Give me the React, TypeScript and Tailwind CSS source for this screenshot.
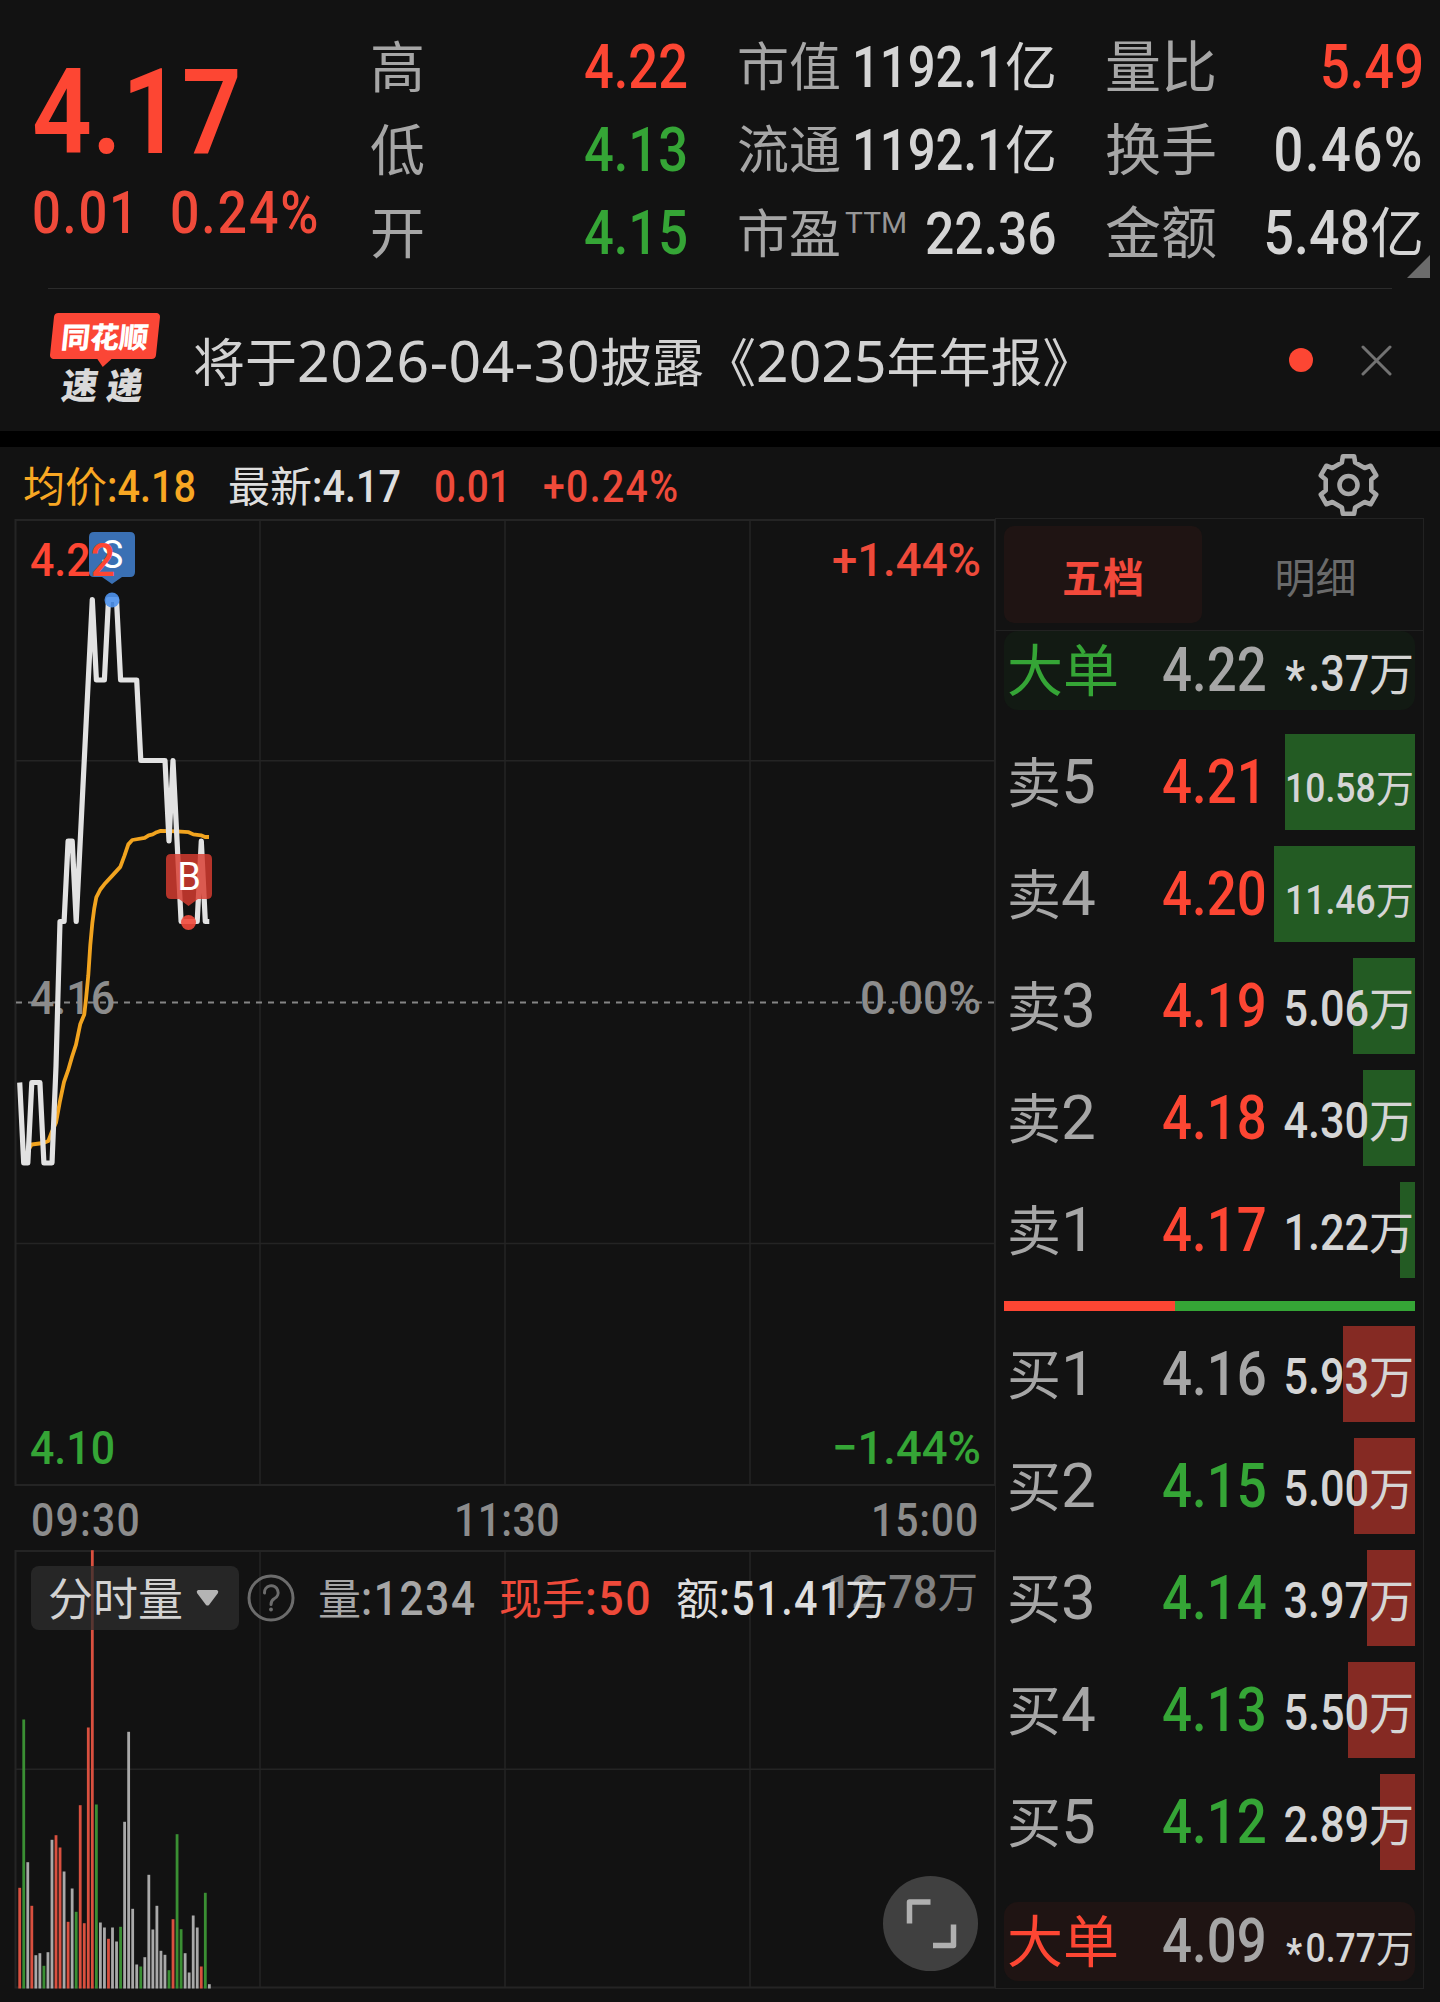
import type { ReactNode } from "react";

type Tone = "up" | "down" | "flat";

type Level = {
  label: string;
  price: string;
  tone: Tone;
  volume: string;
  size: number;
  small?: boolean;
};

const TONE_TEXT: Record<Tone, string> = {
  up: "text-[#fd4633]",
  down: "text-[#35a536]",
  flat: "text-[#a6a6a6]",
};

const SELLS: Level[] = [
  { label: "卖5", price: "4.21", tone: "up", volume: "10.58", size: 130, small: true },
  { label: "卖4", price: "4.20", tone: "up", volume: "11.46", size: 141, small: true },
  { label: "卖3", price: "4.19", tone: "up", volume: "5.06", size: 62 },
  { label: "卖2", price: "4.18", tone: "up", volume: "4.30", size: 52 },
  { label: "卖1", price: "4.17", tone: "up", volume: "1.22", size: 15 },
];

const BUYS: Level[] = [
  { label: "买1", price: "4.16", tone: "flat", volume: "5.93", size: 72 },
  { label: "买2", price: "4.15", tone: "down", volume: "5.00", size: 61 },
  { label: "买3", price: "4.14", tone: "down", volume: "3.97", size: 48 },
  { label: "买4", price: "4.13", tone: "down", volume: "5.50", size: 67 },
  { label: "买5", price: "4.12", tone: "down", volume: "2.89", size: 35 },
];

// 分时价格：[分钟, 价格]
const PRICES: [number, number][] = [
  [0, 4.15], [1, 4.14], [2, 4.14], [3, 4.15], [5, 4.15], [6, 4.14], [8, 4.14], [9, 4.152],
  [10, 4.17], [11, 4.17], [12, 4.18], [13, 4.18], [14, 4.17], [18, 4.21], [19, 4.2], [21, 4.2],
  [22, 4.21], [24, 4.21], [25, 4.2], [29, 4.2], [30, 4.19], [36, 4.19], [37, 4.18], [38, 4.19],
  [40, 4.17], [44, 4.17], [45, 4.18], [46, 4.17], [47, 4.17],
];

const AVG_LINE =
  "23.7,1157.5 31.7,1144.5 43.3,1143 48.3,1141 52,1131.5 56,1122.8 60,1101 64,1082 68,1070.7 72,1056.9 76,1044.7 80.3,1023.9 84.3,1014.4 86,999.2 88.3,975.3 90.3,945 92.3,923.3 94.3,908.1 96.3,897.3 100.3,889.5 104.3,884.3 112.3,875.6 120.3,866.9 124.3,856.1 128.3,844.4 132.3,840 144.7,837.9 148.7,835.3 152.7,834.4 156.7,832.2 160.7,830.9 176.7,831.4 188.7,832.2 193.3,834.4 201,835.3 205,837 209,837";

// 每分钟成交量柱：颜色 + 高度
const BARS: [string, number][] = [
  ["r", 100.7], ["g", 269], ["w", 126.3], ["r", 82.7], ["w", 33.3], ["w", 35.3], ["g", 22.7], ["w", 36.3],
  ["w", 148.7], ["r", 153.3], ["r", 141], ["w", 117], ["r", 66.7], ["w", 100], ["g", 76.7], ["r", 183.3],
  ["r", 65.3], ["r", 261], ["r", 438.3], ["g", 184], ["w", 66], ["w", 61], ["r", 49.7], ["w", 61],
  ["w", 47], ["g", 61.7], ["w", 166.7], ["w", 256.7], ["w", 79.7], ["w", 24], ["g", 22], ["w", 31.3],
  ["w", 113.7], ["w", 59], ["w", 82.7], ["w", 37.7], ["w", 33.7], ["g", 18.3], ["r", 69.3], ["g", 154.3],
  ["g", 59.3], ["w", 35.3], ["w", 16], ["w", 73], ["w", 61], ["r", 22], ["g", 95.7], ["w", 4.3],
];

const BAR_FILL: Record<string, string> = { r: "#d9503f", g: "#3a8f33", w: "#a9a9a9" };

const minuteX = (m: number) => 19.7 + m * 4.035;
const priceY = (p: number) => 1002 - (p - 4.16) * 8050;

const PRICE_LINE = PRICES.map(([m, p]) => `${minuteX(m).toFixed(1)},${priceY(p).toFixed(1)}`).join(" ");

function gearPath() {
  const pts: string[] = [];
  for (let i = 0; i < 6; i++) {
    for (const [offset, r] of [[-16.5, 22.4], [-11, 28], [11, 28], [16.5, 22.4]]) {
      const a = ((i * 60 + offset) * Math.PI) / 180;
      pts.push(`${(32 + r * Math.sin(a)).toFixed(2)} ${(32 - r * Math.cos(a)).toFixed(2)}`);
    }
  }
  return `M${pts.join("L")}Z`;
}

function Num({ children, className = "" }: { children: ReactNode; className?: string }) {
  return <span className={`inline-block whitespace-nowrap font-medium ${className}`}>{children}</span>;
}

function Stat({ label, children, labelClass }: { label: ReactNode; children: ReactNode; labelClass: string }) {
  return (
    <div className="flex h-[83px] items-baseline justify-between leading-[83px]">
      <span className={`whitespace-nowrap text-[#a6a6a6] ${labelClass}`}>{label}</span>
      <span className="flex items-baseline">{children}</span>
    </div>
  );
}

const STAT_NUM = "origin-right translate-y-px scale-x-[.86] text-[61px]";

function Quote() {
  return (
    <section className="flex h-[288px]">
      <div className="w-[370px] pl-[32px] pt-[54px] text-[#fd4633]">
        <div className="h-[118px] text-[118px] leading-[118px]">
          <span className="inline-block origin-left scale-x-[.89] font-semibold">4.17</span>
        </div>
        <div className="mt-[11px] flex text-[59px] leading-[60px] text-[#f04a3a]">
          <Num className="w-[138px] origin-left scale-x-[.86] tracking-[0.035em]">0.01</Num>
          <Num className="origin-left scale-x-[.88] tracking-[0.035em]">0.24%</Num>
        </div>
      </div>

      <div className="w-[318px] pt-[25px]">
        <Stat label="高" labelClass="text-[55px]">
          <Num className={`${STAT_NUM} text-[#fd4633]`}>4.22</Num>
        </Stat>
        <Stat label="低" labelClass="text-[55px]">
          <Num className={`${STAT_NUM} text-[#35a536]`}>4.13</Num>
        </Stat>
        <Stat label="开" labelClass="text-[55px]">
          <Num className={`${STAT_NUM} text-[#35a536]`}>4.15</Num>
        </Stat>
      </div>

      <div className="ml-[49px] w-[320px] pt-[25px] text-[#d5d5d5]">
        {["市值", "流通"].map((name) => (
          <Stat key={name} label={name} labelClass="text-[52px]">
            <Num className="w-[153px] origin-left translate-y-px scale-x-[.86] text-[57px]">1192.1</Num>
            <span className="text-[52px]">亿</span>
          </Stat>
        ))}
        <Stat
          labelClass="text-[52px]"
          label={
            <>
              市盈
              <span className="inline-block -translate-y-[20px] pl-[4px] text-[30px] leading-none text-[#969696]">TTM</span>
            </>
          }
        >
          <Num className="w-[132px] origin-left translate-y-px scale-x-[.86] text-[60px]">22.36</Num>
        </Stat>
      </div>

      <div className="relative ml-[48px] w-[319px] pt-[25px] text-[#d5d5d5]">
        <Stat label="量比" labelClass="text-[56px]">
          <Num className={`${STAT_NUM} text-[#fd4633]`}>5.49</Num>
        </Stat>
        <Stat label="换手" labelClass="text-[56px]">
          <Num className={`${STAT_NUM} tracking-[0.03em]`}>0.46%</Num>
        </Stat>
        <Stat label="金额" labelClass="text-[56px]">
          <Num className="origin-right translate-y-px scale-x-[.88] text-[61px]">5.48</Num>
          <span className="text-[54px]">亿</span>
        </Stat>
        <svg className="absolute -right-[6px] top-[255px] h-[23px] w-[23px]" viewBox="0 0 23 23">
          <path d="M23 0V23H0Z" fill="#6c6c6c" />
        </svg>
      </div>
    </section>
  );
}

function NewsBanner() {
  return (
    <section className="mx-12 flex h-[143px] items-center border-t border-[#2b2b2b]">
      <div className="flex h-[94px] w-[114px] flex-col items-center">
        <div className="relative flex h-[46px] w-[106px] -skew-x-[6deg] items-center justify-center rounded-[4px] bg-[#fb4636]">
          <span className="translate-y-[2px] text-[29px] font-black leading-none text-white">同花顺</span>
          <svg className="absolute left-[47px] top-[45px] h-[9px] w-[16px]" viewBox="0 0 16 9">
            <path d="M0 0H16L7 9Z" fill="#fb4636" />
          </svg>
        </div>
        <div className="mt-[9px] flex -skew-x-[8deg] gap-[9px] pr-[4px] text-[36px] font-black leading-[38px] text-[#d9d9d9]">
          <span>速</span>
          <span>递</span>
        </div>
      </div>
      <p className="ml-[31px] flex-1 translate-y-px whitespace-nowrap text-[52px] leading-none text-[#d2d2d2]">
        将于<span className="font-['Noto_Sans'] text-[57px] leading-none tracking-[0.55px]">2026-04-30</span>披露《
        <span className="font-['Noto_Sans'] text-[57px] leading-none">2025</span>年年报》
      </p>
      <span className="mr-[48px] h-[24px] w-[24px] rounded-full bg-[#fd4633]" />
      <svg className="h-[31px] w-[31px]" viewBox="0 0 31 31" stroke="#727272" strokeWidth="3" strokeLinecap="round">
        <path d="M2 2L29 29M29 2L2 29" />
      </svg>
    </section>
  );
}

function ChartHeader() {
  return (
    <div className="flex h-[72px] items-baseline pl-[23px] text-[42px] leading-[80px]">
      <span className="text-[#f8a723]">均价</span>
      <Num className="w-[121px] origin-left scale-x-[.9] text-[44px] text-[#f8a723]">:4.18</Num>
      <span className="text-[#dedede]">最新</span>
      <Num className="w-[122px] origin-left scale-x-[.9] text-[44px] text-[#dedede]">:4.17</Num>
      <Num className="w-[109px] origin-left scale-x-[.88] text-[44px] text-[#ee4a3a]">0.01</Num>
      <Num className="origin-left scale-x-[.89] text-[44px] tracking-[0.035em] text-[#ee4a3a]">+0.24%</Num>
      <svg className="ml-auto mr-[58px] h-[67px] w-[67px] translate-y-[1.5px] self-center" viewBox="0 0 64 64" fill="none" stroke="#a8a8a8" strokeWidth="4.4" strokeLinejoin="round">
        <path d={gearPath()} />
        <circle cx="32" cy="32" r="8.6" />
      </svg>
    </div>
  );
}

function PriceChart() {
  return (
    <svg className="block h-[967px] w-[996px]" viewBox="0 519 996 967">
      <g stroke="#242424" strokeWidth="2" fill="none">
        <path d="M15.5 520H995V1485H15.5Z" />
        <path d="M260 520V1485M505 520V1485M750 520V1485M16 760.7H995M16 1243.5H995" strokeWidth="1.5" />
      </g>
      <path d="M16 1002.5H995" stroke="#858585" strokeWidth="2" strokeDasharray="6 6" />
      <g fontSize="47" fontWeight="500">
        <text x="30" y="1014" textLength="85" lengthAdjust="spacingAndGlyphs" fill="#8c8c8c">4.16</text>
        <text x="860" y="1014" textLength="121" lengthAdjust="spacingAndGlyphs" fill="#8c8c8c">0.00%</text>
        <text x="30" y="1464" textLength="85" lengthAdjust="spacingAndGlyphs" fill="#35a536">4.10</text>
        <text x="832" y="1464" textLength="149" lengthAdjust="spacingAndGlyphs" fill="#35a536">−1.44%</text>
        <text x="832" y="576" textLength="149" lengthAdjust="spacingAndGlyphs" fill="#ee4a3a">+1.44%</text>
      </g>
      <polyline points={AVG_LINE} fill="none" stroke="#f2a41f" strokeWidth="3.8" strokeLinejoin="round" />
      <polyline points={PRICE_LINE} fill="none" stroke="#e2e2e2" strokeWidth="5.2" strokeLinejoin="round" />

      <path d="M94 532H130Q135 532 135 537V572Q135 577 130 577H122L112 584L102 577H94Q89 577 89 572V537Q89 532 94 532Z" fill="#3a70b4" />
      <text x="112" y="568" textAnchor="middle" fontSize="38" fill="#fff">S</text>
      <text x="30" y="576" textLength="85" lengthAdjust="spacingAndGlyphs" fontSize="47" fontWeight="500" fill="#fd4633">4.22</text>
      <circle cx="112" cy="600" r="7.5" fill="#4f94ee" fillOpacity=".9" />

      <path d="M171 854H207Q212 854 212 859V894Q212 899 207 899H198L188.5 906L179 899H171Q166 899 166 894V859Q166 854 171 854Z" fill="#d93c30" fillOpacity=".82" />
      <text x="189" y="890" textAnchor="middle" fontSize="38" fill="#fff">B</text>
      <circle cx="188.5" cy="922.5" r="7.5" fill="#f2493b" fillOpacity=".9" />
    </svg>
  );
}

function VolumePanel() {
  return (
    <div className="relative h-[452px] w-[996px]">
      <svg className="absolute inset-0 h-[452px] w-[996px]" viewBox="0 1550 996 452">
        <g stroke="#242424" strokeWidth="2" fill="none">
          <path d="M15.5 1551H995V1987.5H15.5Z" />
          <path d="M260 1551V1987M505 1551V1987M750 1551V1987M16 1769.3H995" strokeWidth="1.5" />
        </g>
        {BARS.map(([c, h], i) => (
          <rect key={i} x={minuteX(i) - 1.4} y={1988.5 - h} width="2.8" height={h} fill={BAR_FILL[c]} />
        ))}
        <text x="827" y="1608" textLength="151" lengthAdjust="spacingAndGlyphs" fontSize="46" fontWeight="500" fill="#808080">
          12.78<tspan fontSize="43" fontWeight="400">万</tspan>
        </text>
      </svg>

      <div className="relative flex items-center pl-[31px] pt-[15px] leading-[64px]">
        <button type="button" className="flex h-[64px] w-[208px] items-center rounded-[8px] bg-[#2e2e2e]/75 pl-[17px] text-[45px] text-[#d2d2d2]">
          <span className="translate-y-[3px]">分时量</span>
          <svg className="ml-[13px] mt-px h-[16px] w-[23px]" viewBox="0 0 23 16">
            <path d="M2 0H21Q23 1 22 3L13 15Q11.5 16 10 15L1 3Q0 1 2 0Z" fill="#b4b4b4" />
          </svg>
        </button>
        <svg className="ml-[8px] h-[48px] w-[48px]" viewBox="0 0 48 48" fill="none" stroke="#6c6c6c" strokeWidth="3">
          <circle cx="24" cy="24" r="22" />
          <path d="M17.5 19A6.8 6.8 0 1 1 27.5 24.5Q24 26.5 24 30.5" strokeLinecap="round" />
          <circle cx="24" cy="35.5" r="1.2" fill="#6c6c6c" strokeWidth="1.5" />
        </svg>
        <div className="ml-[23px] flex translate-y-[2px] items-baseline text-[43px]">
          <span className="text-[#a6a6a6]">量</span>
          <Num className="w-[138px] origin-left scale-x-[.88] text-[48px] tracking-[0.04em] text-[#a6a6a6]">:1234</Num>
          <span className="text-[#ee4a3a]">现手</span>
          <Num className="w-[91px] origin-left scale-x-[.93] text-[48px] tracking-[0.035em] text-[#ee4a3a]">:50</Num>
          <span className="text-[#dedede]">额</span>
          <Num className="w-[126px] origin-left scale-x-[.86] text-[48px] tracking-[0.035em] text-[#dedede]">:51.41</Num>
          <span className="text-[#dedede]">万</span>
        </div>
      </div>

      <button type="button" aria-label="全屏" className="absolute left-[883px] top-[326px] h-[95px] w-[95px] rounded-full bg-[#404040]">
        <svg viewBox="0 0 95 95" fill="none" stroke="#b0b0b0" strokeWidth="5.5" strokeLinejoin="round">
          <path d="M47.5 26H26.5V47.5M50 69.5H70.5V48.5" />
        </svg>
      </button>
    </div>
  );
}

function LevelRow({ level, bar }: { level: Level; bar: string }) {
  return (
    <div className="relative flex h-[96px] items-baseline leading-[96px]">
      <div className={`absolute right-0 top-0 h-[96px] ${bar}`} style={{ width: level.size }} />
      <div className="relative w-[158px] pl-[3px] text-[#a6a6a6]">
        <span className="text-[54px]">{level.label[0]}</span>
        <span className="text-[62px]">{level.label[1]}</span>
      </div>
      <Num className={`relative w-[100px] origin-left scale-x-[.865] text-[61px] ${TONE_TEXT[level.tone]}`}>{level.price}</Num>
      <div className="relative -top-px flex flex-1 items-baseline justify-end pr-px text-[#d5d5d5]">
        <Num className={`origin-right scale-x-[.865] ${level.small ? "text-[41px]" : "text-[50px]"}`}>{level.volume}</Num>
        <span className={level.small ? "text-[38px]" : "text-[45px]"}>万</span>
      </div>
    </div>
  );
}

function BigOrder({ tone, price, volume, small }: { tone: Tone; price: string; volume: string; small?: boolean }) {
  return (
    <div className={`flex h-[79px] items-baseline rounded-[14px] leading-[78px] ${tone === "up" ? "bg-[#1f1413]" : "bg-[#121a13]"}`}>
      <span className={`w-[158px] pl-[3px] text-[56px] ${TONE_TEXT[tone]}`}>大单</span>
      <Num className="w-[100px] origin-left scale-x-[.865] text-[61px] text-[#a6a6a6]">{price}</Num>
      <div className="flex flex-1 items-baseline justify-end pr-px text-[#d5d5d5]">
        <Num className={`origin-right scale-x-[.865] ${small ? "text-[41px]" : "text-[50px]"}`}>
          <span className="mr-[4px] inline-block translate-y-[5px] font-bold">*</span>
          {volume}
        </Num>
        <span className={small ? "text-[38px]" : "text-[45px]"}>万</span>
      </div>
    </div>
  );
}

function OrderBook() {
  return (
    <aside className="-ml-px -mt-px h-[1471px] w-[429px] border border-[#222222] pr-[8px]">
      <div className="-mr-[8px] flex h-[112px] border-b border-[#222222] pl-[8px] pt-[7px] text-[41px] leading-[106px]">
        <div className="h-[97px] w-[198px] rounded-[10px] bg-[#1f1413] text-center font-bold text-[#f2493b]">五档</div>
        <div className="flex-1 pl-[6px] text-center text-[#6a6a6a]">明细</div>
      </div>
      <div className="pl-[8px]">
        <BigOrder tone="down" price="4.22" volume=".37" />
        <div className="mt-[24px] flex flex-col gap-4">
          {SELLS.map((l) => (
            <LevelRow key={l.label} level={l} bar="bg-[#235b23]" />
          ))}
        </div>
        <div className="my-[23px] mb-[15px] flex h-[10px]">
          <div className="w-[171px] bg-[#fd4633]" />
          <div className="flex-1 bg-[#35a536]" />
        </div>
        <div className="flex flex-col gap-4">
          {BUYS.map((l) => (
            <LevelRow key={l.label} level={l} bar="bg-[#852a23]" />
          ))}
        </div>
        <div className="mt-[32px]">
          <BigOrder tone="up" price="4.09" volume="0.77" small />
        </div>
      </div>
    </aside>
  );
}

export default function App() {
  return (
    <div className="h-[2002px] w-[1440px] overflow-hidden bg-[#121212] font-['Roboto','Noto_Sans_CJK_SC',sans-serif]">
      <Quote />
      <NewsBanner />
      <div className="h-[16px] bg-black" />
      <ChartHeader />
      <div className="flex">
        <div className="w-[996px] shrink-0">
          <PriceChart />
          <div className="flex h-[64px] items-center pr-[17px] pt-[4px] text-[47px] text-[#8c8c8c]">
            <Num className="ml-[31px] w-[423px] origin-left scale-x-[.87] tracking-[0.03em]">09:30</Num>
            <Num className="origin-left scale-x-[.87] tracking-[0.01em]">11:30</Num>
            <Num className="ml-auto origin-right scale-x-[.87] tracking-[0.02em]">15:00</Num>
          </div>
          <VolumePanel />
        </div>
        <OrderBook />
      </div>
    </div>
  );
}
